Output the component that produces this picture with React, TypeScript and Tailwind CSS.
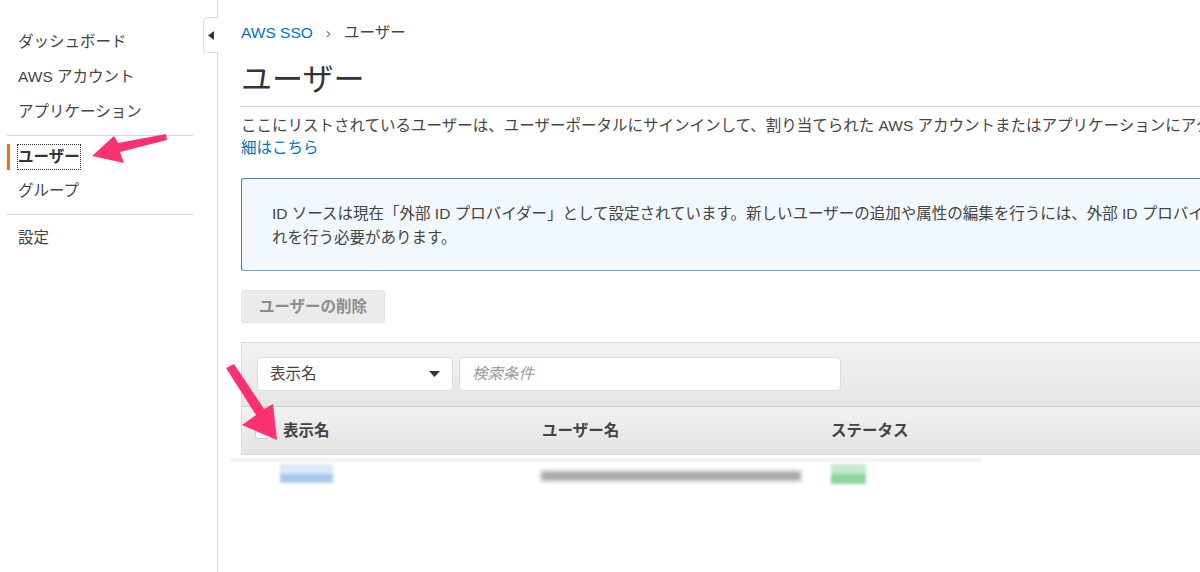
import React from "react";

const font = {
  fontFamily: '"Liberation Sans", "Noto Sans CJK JP", sans-serif',
};

function NavItem(props: { label: string; active?: boolean; h?: string }) {
  return (
    <div className={`relative flex items-center pl-[18px] ${props.h ?? "h-[35px]"}`}>
      {props.active ? (
        <span className="absolute left-[7px] top-[4px] h-[26px] w-[3px] bg-[#ec7211]" />
      ) : null}
      <span
        className={
          props.active
            ? "font-bold text-[#333] outline-1 outline-dotted outline-[#333] leading-[24px]"
            : "text-[#444]"
        }
      >
        {props.label}
      </span>
    </div>
  );
}

function Sidebar() {
  return (
    <aside className="relative w-[218px] flex-none border-r border-[#d5dbdb] text-[15.5px]">
      <nav className="pt-[24px]">
        <NavItem label="ダッシュボード" />
        <NavItem label="AWS アカウント" />
        <NavItem label="アプリケーション" />
        <div className="mx-[7px] mb-[4px] mt-[6px] w-[186px] border-t border-[#d5d5d5]" />
        <NavItem label="ユーザー" active h="h-[34px]" />
        <NavItem label="グループ" h="h-[34px]" />
        <div className="mx-[7px] mb-[5px] mt-[6px] w-[186px] border-t border-[#d5d5d5]" />
        <NavItem label="設定" />
      </nav>
      {/* collapse tab */}
      <div className="absolute right-[-1px] top-[17px] flex h-[36px] w-[15px] items-center justify-center rounded-l-[5px] border border-r-0 border-[#d5dbdb] bg-white">
        <svg width="6" height="9" viewBox="0 0 6 9">
          <path d="M6 0 L0 4.5 L6 9 Z" fill="#333" />
        </svg>
      </div>
    </aside>
  );
}

function Main() {
  return (
    <main className="w-[1100px] flex-none pl-[23px] pt-[22px] text-[15.5px] text-[#444]">
      <div className="flex h-[22px] items-center">
        <span className="text-[#0073bb]">AWS SSO</span>
        <span className="mx-[13px] text-[#687078]">›</span>
        <span className="text-[#444]">ユーザー</span>
      </div>
      <h1 className="mt-[16px] h-[40px] text-[31px] leading-[40px] text-[#333]">ユーザー</h1>
      <div className="mt-[6px] border-t border-[#d5d5d5]" />
      <div className="mt-[8px] leading-[22px]">
        <div className="whitespace-nowrap">
          ここにリストされているユーザーは、ユーザーポータルにサインインして、割り当てられた AWS アカウントまたはアプリケーションにアクセスできます。
          <span className="text-[#0073bb]">詳</span>
        </div>
        <div className="text-[#0073bb]">細はこちら</div>
      </div>
      <div className="mt-[19px] rounded-[3px] border border-[#3b82d0] border-b-[#6f9fd3] bg-[#f1f8fe] pb-[20px] pl-[30px] pt-[23px] leading-[24px]">
        <div className="whitespace-nowrap">
          ID ソースは現在「外部 ID プロバイダー」として設定されています。新しいユーザーの追加や属性の編集を行うには、外部 ID プロバイダーでこ
        </div>
        <div>れを行う必要があります。</div>
      </div>
      <button className="mt-[19px] flex h-[33px] w-[144px] items-center justify-center rounded-[3px] border border-[#e3e3e3] bg-[#ebebeb] font-bold text-[#8d8d8d]">
        ユーザーの削除
      </button>
      <section className="mt-[19px] border border-[#d9d9d9] border-r-0">
        <div className="flex gap-[6px] bg-gradient-to-b from-[#f2f2f2] to-[#e5e5e5] pb-[15px] pl-[15px] pt-[14px]">
          <div className="flex h-[34px] w-[196px] items-center justify-between rounded-[4px] border border-[#dcdcdc] bg-white pl-[12px] pr-[12px]">
            <span className="text-[#444]">表示名</span>
            <svg width="11" height="6" viewBox="0 0 11 6">
              <path d="M0 0 L11 0 L5.5 6 Z" fill="#333" />
            </svg>
          </div>
          <div className="flex h-[34px] w-[382px] items-center rounded-[4px] border border-[#dcdcdc] bg-white pl-[12px]">
            <span className="italic text-[#9a9a9a]">検索条件</span>
          </div>
        </div>
        <div className="flex h-[48px] items-center border-t border-[#cfcfcf] bg-gradient-to-b from-[#f2f2f2] to-[#e3e3e3] font-bold text-[#444]">
          <span className="ml-[13px] h-[17px] w-[16px] rounded-[3px] border border-[#cfcfcf] bg-white" />
          <span className="ml-[12px] w-[259px]">表示名</span>
          <span className="w-[289px]">ユーザー名</span>
          <span>ステータス</span>
        </div>
      </section>
      <div className="ml-[-10px] mt-[3px] h-[4px] w-[750px] bg-[#f3f3f3]" />
      <div className="relative h-[40px]">
        <div className="absolute left-[39px] top-[2px] h-[19px] w-[53px] blur-[1.5px]">
          <div className="h-[10px] bg-[#dbe8f6]" />
          <div className="h-[9px] bg-[#a9c8ea]" />
        </div>
        <div className="absolute left-[300px] top-[9px] h-[10px] w-[260px] bg-[#a9a9a9] blur-[2px]" />
        <div className="absolute left-[590px] top-[2px] h-[20px] w-[35px] blur-[1.5px]">
          <div className="h-[10px] bg-[#c6e8cf]" />
          <div className="h-[10px] bg-[#8ed3a2]" />
        </div>
      </div>
    </main>
  );
}

export default function App() {
  return (
    <div
      className="relative flex h-[572px] w-[1200px] overflow-hidden bg-white"
      style={font}
    >
      <Sidebar />
      <Main />
      <svg
        className="pointer-events-none absolute left-0 top-0"
        width="1200"
        height="572"
        viewBox="0 0 1200 572"
      >
        <polygon
          points="166,134 118,143 114,136 92,156 124,163 120,152 167,140"
          fill="#fd3170"
        />
        <polygon
          points="226,368 256,415 242,425 277,440 273,404 264,409 234,364"
          fill="#fd3170"
        />
      </svg>
    </div>
  );
}
